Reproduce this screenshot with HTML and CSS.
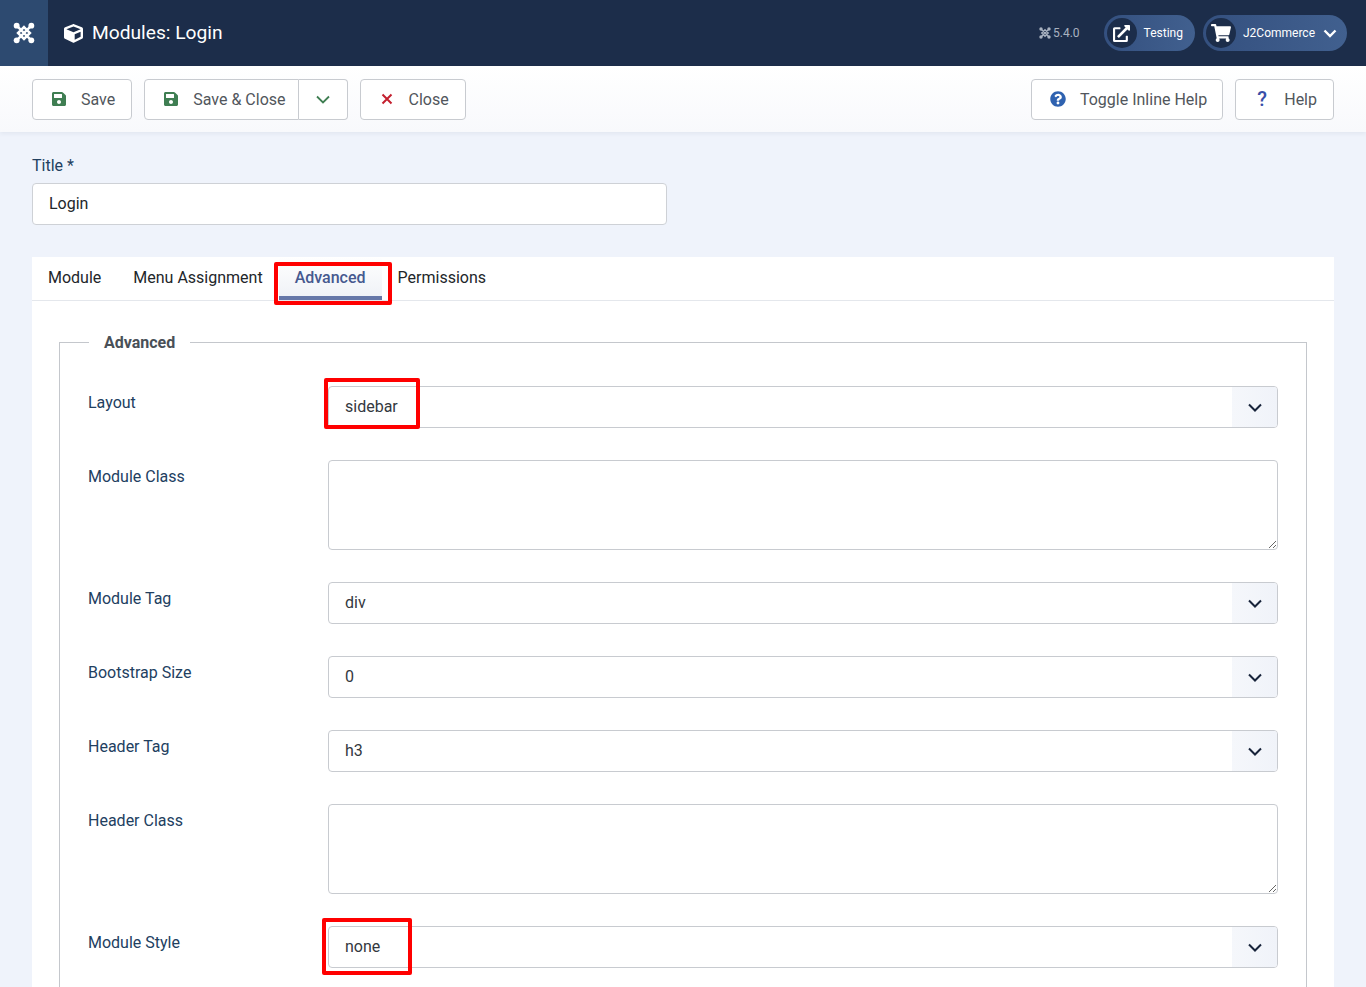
FILE: index.html
```html
<!DOCTYPE html>
<html lang="en">

<head>
    <meta charset="UTF-8">
    <meta name="viewport" content="width=device-width, initial-scale=1.0">
    <title>Modules: Login</title>
    <link rel="stylesheet" href="styles.css">
</head>

<body>

    <header class="topbar">
        <a href="#" class="topbar-logo">
            <svg class="joomla-icon" viewBox="0 0 24 24">
                <path class="joomla-lines" d="M4 4 L20 20 M20 4 L4 20 M12 5.5 L18.5 12 L12 18.5 L5.5 12 Z" />
                <circle cx="4" cy="4" r="3.2" />
                <circle cx="20" cy="4" r="3.2" />
                <circle cx="4" cy="20" r="3.2" />
                <circle cx="20" cy="20" r="3.2" />
            </svg>
        </a>
        <h1 class="page-title">
            <svg class="cube-icon" viewBox="0 0 512 512">
                <path d="M239.1 6.3l-208 78c-18.7 7-31.1 25-31.1 45v225.1c0 18.2 10.3 34.8 26.5 42.9l208 104c13.5 6.8 29.4 6.8 42.9 0l208-104c16.3-8.1 26.5-24.8 26.5-42.9V129.3c0-20-12.4-37.9-31.1-44.9l-208-78C262 2.2 250 2.2 239.1 6.3zM256 68.4l192 72v1.1l-192 78-192-78v-1.1l192-72zm32 356V275.5l160-65v133.9l-160 80z" />
            </svg>
            Modules: Login
        </h1>
        <div class="topbar-right">
            <span class="version">
                <svg class="version-icon" viewBox="0 0 24 24">
                    <path class="joomla-lines" d="M4 4 L20 20 M20 4 L4 20 M12 5.5 L18.5 12 L12 18.5 L5.5 12 Z" />
                    <circle cx="4" cy="4" r="3.4" />
                    <circle cx="20" cy="4" r="3.4" />
                    <circle cx="4" cy="20" r="3.4" />
                    <circle cx="20" cy="20" r="3.4" />
                </svg>
                5.4.0
            </span>
            <a href="#" class="pill">
                <span class="pill-icon">
                    <svg class="link-icon" viewBox="0 0 512 512">
                        <path d="M432,320H400a16,16,0,0,0-16,16V448H64V128H208a16,16,0,0,0,16-16V80a16,16,0,0,0-16-16H48A48,48,0,0,0,0,112V464a48,48,0,0,0,48,48H400a48,48,0,0,0,48-48V336A16,16,0,0,0,432,320ZM488,0h-128c-21.37,0-32.05,25.91-17,41l35.73,35.73L135,320.37a24,24,0,0,0,0,34L157.67,377a24,24,0,0,0,34,0L435.28,133.32,471,169c15,15,41,4.5,41-17V24A24,24,0,0,0,488,0Z" />
                    </svg>
                </span>
                Testing
            </a>
            <a href="#" class="pill pill-user">
                <span class="pill-icon">
                    <svg class="cart-icon" viewBox="0 0 576 512">
                        <path d="M528.12 301.319l47.273-208C578.806 78.301 567.391 64 551.99 64H159.208l-9.166-44.81C147.758 8.021 137.93 0 126.529 0H24C10.745 0 0 10.745 0 24v16c0 13.255 10.745 24 24 24h69.883l70.248 343.435C147.325 417.1 136 435.222 136 456c0 30.928 25.072 56 56 56s56-25.072 56-56c0-15.674-6.447-29.835-16.824-40h209.647C430.447 426.165 424 440.326 424 456c0 30.928 25.072 56 56 56s56-25.072 56-56c0-22.172-12.888-41.332-31.579-50.405l5.517-24.276c3.413-15.018-8.002-29.319-23.403-29.319H218.117l-6.545-32h293.145c11.206 0 20.92-7.754 23.403-18.681z" />
                    </svg>
                </span>
                J2Commerce
                <svg class="pill-chevron" viewBox="0 0 14 9">
                    <polyline points="1.5,1.5 7,7 12.5,1.5" />
                </svg>
            </a>
        </div>
    </header>

    <div class="toolbar">
        <a href="#" class="btn">
            <span class="btn-icon">
                <svg class="save-icon" viewBox="0 0 448 512">
                    <path d="M433.941 129.941l-83.882-83.882A48 48 0 0 0 316.118 32H48C21.49 32 0 53.49 0 80v352c0 26.51 21.49 48 48 48h352c26.51 0 48-21.49 48-48V163.882a48 48 0 0 0-14.059-33.941zM224 416c-35.346 0-64-28.654-64-64 0-35.346 28.654-64 64-64s64 28.654 64 64c0 35.346-28.654 64-64 64zm96-304.52V212c0 6.627-5.373 12-12 12H76c-6.627 0-12-5.373-12-12V108c0-6.627 5.373-12 12-12h228.52c3.183 0 6.235 1.264 8.485 3.515l3.48 3.48A11.996 11.996 0 0 1 320 111.48z" />
                </svg>
            </span>
            Save
        </a>
        <div class="btn-group">
            <a href="#" class="btn btn-main">
                <span class="btn-icon">
                    <svg class="save-icon" viewBox="0 0 448 512">
                        <path d="M433.941 129.941l-83.882-83.882A48 48 0 0 0 316.118 32H48C21.49 32 0 53.49 0 80v352c0 26.51 21.49 48 48 48h352c26.51 0 48-21.49 48-48V163.882a48 48 0 0 0-14.059-33.941zM224 416c-35.346 0-64-28.654-64-64 0-35.346 28.654-64 64-64s64 28.654 64 64c0 35.346-28.654 64-64 64zm96-304.52V212c0 6.627-5.373 12-12 12H76c-6.627 0-12-5.373-12-12V108c0-6.627 5.373-12 12-12h228.52c3.183 0 6.235 1.264 8.485 3.515l3.48 3.48A11.996 11.996 0 0 1 320 111.48z" />
                    </svg>
                </span>
                Save &amp; Close
            </a>
            <a href="#" class="btn btn-toggle">
                <svg class="toggle-chevron" viewBox="0 0 14 9">
                    <polyline points="1,1.5 7,7.5 13,1.5" />
                </svg>
            </a>
        </div>
        <a href="#" class="btn">
            <span class="btn-icon">
                <svg class="close-icon" viewBox="0 0 12 12">
                    <path d="M1.5 1.5 L10.5 10.5 M10.5 1.5 L1.5 10.5" />
                </svg>
            </span>
            Close
        </a>
        <a href="#" class="btn btn-push">
            <span class="btn-icon">
                <svg class="help-icon" viewBox="0 0 512 512">
                    <path d="M504 256c0 136.997-111.043 248-248 248S8 392.997 8 256C8 119.083 119.043 8 256 8s248 111.083 248 248zM262.655 90c-54.497 0-89.255 22.957-116.549 63.758-3.536 5.286-2.353 12.415 2.715 16.258l34.699 26.31c5.205 3.947 12.621 3.008 16.665-2.122 17.864-22.658 30.113-35.797 57.303-35.797 20.429 0 45.698 13.148 45.698 32.958 0 14.976-12.363 22.667-32.534 33.976C247.128 238.528 216 254.941 216 296v4c0 6.627 5.373 12 12 12h56c6.627 0 12-5.373 12-12v-1.333c0-28.462 83.186-29.647 83.186-106.667 0-58.002-60.165-102-116.531-102zM256 338c-25.365 0-46 20.635-46 46 0 25.364 20.635 46 46 46s46-20.636 46-46c0-25.365-20.635-46-46-46z" />
                </svg>
            </span>
            Toggle Inline Help
        </a>
        <a href="#" class="btn">
            <span class="btn-icon question-mark">?</span>
            Help
        </a>
    </div>

    <main class="content">
        <label class="title-label" for="title">Title *</label>
        <input class="title-input" type="text" id="title" value="Login">

        <div class="tab-panel">
            <div class="tabs">
                <a href="#" class="tab">Module</a>
                <a href="#" class="tab">Menu Assignment</a>
                <a href="#" class="tab tab-active">Advanced<span class="mark mark-tab"></span></a>
                <a href="#" class="tab">Permissions</a>
            </div>

            <fieldset class="options">
                <legend>Advanced</legend>

                <div class="field">
                    <label>Layout</label>
                    <div class="select">
                        sidebar
                        <span class="select-arrow"><svg viewBox="0 0 14 9"><polyline points="1,1.5 7,7.5 13,1.5" /></svg></span>
                        <span class="mark mark-layout"></span>
                    </div>
                </div>

                <div class="field">
                    <label>Module Class</label>
                    <textarea class="textarea"></textarea>
                </div>

                <div class="field">
                    <label>Module Tag</label>
                    <div class="select">
                        div
                        <span class="select-arrow"><svg viewBox="0 0 14 9"><polyline points="1,1.5 7,7.5 13,1.5" /></svg></span>
                    </div>
                </div>

                <div class="field">
                    <label>Bootstrap Size</label>
                    <div class="select">
                        0
                        <span class="select-arrow"><svg viewBox="0 0 14 9"><polyline points="1,1.5 7,7.5 13,1.5" /></svg></span>
                    </div>
                </div>

                <div class="field">
                    <label>Header Tag</label>
                    <div class="select">
                        h3
                        <span class="select-arrow"><svg viewBox="0 0 14 9"><polyline points="1,1.5 7,7.5 13,1.5" /></svg></span>
                    </div>
                </div>

                <div class="field">
                    <label>Header Class</label>
                    <textarea class="textarea"></textarea>
                </div>

                <div class="field">
                    <label>Module Style</label>
                    <div class="select">
                        none
                        <span class="select-arrow"><svg viewBox="0 0 14 9"><polyline points="1,1.5 7,7.5 13,1.5" /></svg></span>
                        <span class="mark mark-style"></span>
                    </div>
                </div>
            </fieldset>
        </div>
    </main>

</body>

</html>
```

FILE: styles.css
```css
html,
body {
    height: 987px;
    overflow: hidden;
}

body {
    margin: 0;
    background-color: #eff3fb;
    font-family: Roboto, "Liberation Sans", sans-serif;
    font-size: 16px;
    line-height: 24px;
    color: #22262a;
}

a {
    text-decoration: none;
}

/* 顶部深色条 */

.topbar {
    display: flex;
    align-items: center;
    height: 66px;
    background-color: #1c2d4a;
}

.topbar-logo {
    display: flex;
    align-items: center;
    justify-content: center;
    width: 48px;
    height: 66px;
    background-color: #2d4a70;
    color: #fff;
}

.joomla-icon {
    width: 22px;
    height: 22px;
    fill: #fff;
}

.joomla-lines {
    fill: none;
    stroke: currentColor;
    stroke-width: 2.7;
}

.page-title {
    display: flex;
    align-items: center;
    gap: 9px;
    margin: 0 0 0 16px;
    font-size: 19.2px;
    font-weight: 400;
    color: #fff;
}

.cube-icon {
    width: 19px;
    height: 19px;
    fill: #fff;
}

.topbar-right {
    display: flex;
    align-items: center;
    margin-left: auto;
    margin-right: 19px;
}

.version {
    display: flex;
    align-items: center;
    gap: 2px;
    margin-right: 24px;
    font-size: 12px;
    color: #a9b2c0;
}

.version-icon {
    width: 12px;
    height: 12px;
    fill: #a9b2c0;
    color: #a9b2c0;
}

.pill {
    display: flex;
    align-items: center;
    height: 36px;
    padding: 0 12px 0 3px;
    border-radius: 18px;
    background: linear-gradient(90deg, #34507f, #41608f);
    font-size: 12px;
    color: #fff;
}

.pill-user {
    margin-left: 8px;
    padding-right: 10px;
}

.pill-icon {
    display: flex;
    align-items: center;
    justify-content: center;
    width: 30px;
    height: 30px;
    margin-right: 7px;
    border-radius: 50%;
    background-color: #1c2d4a;
}

.link-icon {
    width: 17px;
    height: 17px;
    fill: #fff;
}

.cart-icon {
    width: 20px;
    height: 18px;
    fill: #fff;
}

.pill-chevron {
    width: 14px;
    height: 9px;
    margin-left: 8px;
    fill: none;
    stroke: #fff;
    stroke-width: 2.4;
}

/* 按钮条 */

.toolbar {
    display: flex;
    align-items: center;
    gap: 12px;
    height: 66px;
    padding: 0 32px;
    background: linear-gradient(#fff, #f8f9fc);
    box-shadow: 0 2px 4px rgba(30, 50, 90, .06);
}

.btn {
    display: flex;
    align-items: center;
    box-sizing: border-box;
    height: 41px;
    padding: 2px 16px 0;
    border: 1px solid #c8cbd0;
    border-radius: 4px;
    background-color: #fff;
    color: #51565c;
    white-space: nowrap;
}

.btn-main {
    padding-right: 12px;
    border-radius: 4px 0 0 4px;
}

.btn-push {
    margin-left: auto;
    padding-right: 15px;
}

.btn-icon {
    display: flex;
    align-items: center;
    justify-content: center;
    width: 20px;
    margin-top: -2px;
    margin-right: 12px;
}

.save-icon {
    width: 14px;
    height: 16px;
    fill: #3f7e52;
}

.close-icon {
    width: 12px;
    height: 12px;
    fill: none;
    stroke: #c4202f;
    stroke-width: 2;
}

.help-icon {
    width: 16px;
    height: 16px;
    fill: #2f62b0;
}

.question-mark {
    font-size: 20px;
    font-weight: 500;
    color: #3a4fa8;
}

.btn-group {
    display: flex;
}

.btn-toggle {
    justify-content: center;
    width: 49px;
    padding: 0;
    border-left: 0;
    border-radius: 0 4px 4px 0;
}

.toggle-chevron {
    width: 14px;
    height: 9px;
    fill: none;
    stroke: #3f7e52;
    stroke-width: 1.8;
}

/* 内容区 */

.content {
    padding: 22px 32px 0;
}

.title-label {
    display: block;
    margin-bottom: 5px;
    color: #22405f;
}

.title-input {
    display: block;
    box-sizing: border-box;
    width: 635px;
    height: 42px;
    padding: 0 16px 2px;
    border: 1px solid #ced1d6;
    border-radius: 4px;
    background-color: #fff;
    font-family: inherit;
    font-size: 16px;
    color: #22262a;
}

.tab-panel {
    margin-top: 32px;
    padding-bottom: 40px;
    background-color: #fff;
}

.tabs {
    display: flex;
    border-bottom: 1px solid #e4e7ec;
}

.tab {
    position: relative;
    height: 34px;
    padding: 9px 16px 0;
    color: #22262a;
}

.tab-active {
    background: linear-gradient(#fff, #eef1f6);
    box-shadow: inset 0 -4px 0 #6577a8;
    font-weight: 500;
    color: #46598f;
}

/* 红色标注框 */

.mark {
    position: absolute;
    box-sizing: border-box;
    border: 4px solid #f00;
    border-radius: 2px;
}

.mark-tab {
    left: -5px;
    top: 5px;
    width: 118px;
    height: 43px;
}

.mark-layout {
    left: -5px;
    top: -9px;
    width: 96px;
    height: 51px;
}

.mark-style {
    left: -7px;
    top: -9px;
    width: 90px;
    height: 57px;
}

.options {
    margin: 28px 27px 0;
    padding: 31px 28px 0;
    border: 1px solid #c4c7cc;
}

.options legend {
    margin-left: 1px;
    padding: 2px 15px 0;
    font-weight: 700;
    color: #495057;
}

.field {
    display: flex;
    margin-bottom: 32px;
}

.field label {
    flex: 0 0 240px;
    padding-top: 5px;
    color: #22405f;
}

.select {
    position: relative;
    flex: 1;
    box-sizing: border-box;
    height: 42px;
    padding: 8px 16px;
    border: 1px solid #c8cbd0;
    border-radius: 4px;
    background-color: #fff;
    color: #33383e;
}

.select-arrow {
    position: absolute;
    top: 0;
    right: 0;
    bottom: 0;
    display: flex;
    align-items: center;
    justify-content: center;
    width: 45px;
    border-radius: 0 3px 3px 0;
    background: linear-gradient(90deg, #f5f7fb, #f0f3f9);
}

.select-arrow svg {
    width: 14px;
    height: 9px;
    fill: none;
    stroke: #17233a;
    stroke-width: 2;
}

.textarea {
    display: block;
    flex: 1;
    box-sizing: border-box;
    height: 90px;
    border: 1px solid #c8cbd0;
    border-radius: 4px;
    background-color: #fff;
}
```
